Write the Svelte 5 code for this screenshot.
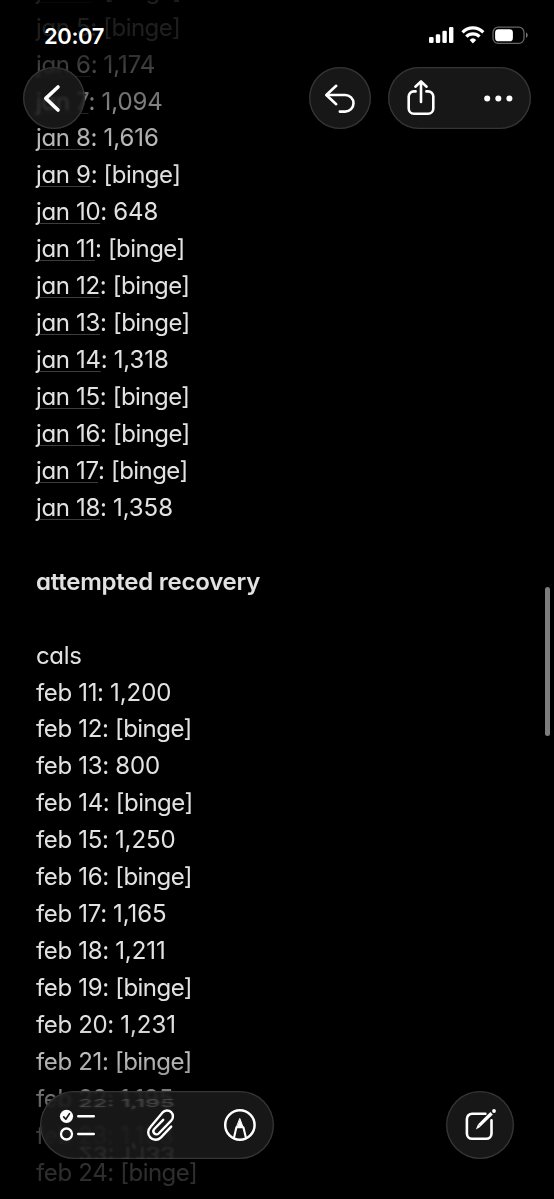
<script lang="ts">
    interface Entry {
        label?: string;
        value?: string;
        dated?: boolean;
        bold?: boolean;
    }

    const january: Entry[] = [
        { label: 'jan 4', value: '[binge]' },
        { label: 'jan 5', value: '[binge]' },
        { label: 'jan 6', value: '1,174' },
        { label: 'jan 7', value: '1,094' },
        { label: 'jan 8', value: '1,616' },
        { label: 'jan 9', value: '[binge]' },
        { label: 'jan 10', value: '648' },
        { label: 'jan 11', value: '[binge]' },
        { label: 'jan 12', value: '[binge]' },
        { label: 'jan 13', value: '[binge]' },
        { label: 'jan 14', value: '1,318' },
        { label: 'jan 15', value: '[binge]' },
        { label: 'jan 16', value: '[binge]' },
        { label: 'jan 17', value: '[binge]' },
        { label: 'jan 18', value: '1,358' }
    ].map((entry) => ({ ...entry, dated: true }))

    const recovery: Entry[] = [
        {},
        { label: 'attempted recovery', bold: true },
        {},
        { label: 'cals' },
        { label: 'feb 11', value: '1,200' },
        { label: 'feb 12', value: '[binge]' },
        { label: 'feb 13', value: '800' },
        { label: 'feb 14', value: '[binge]' },
        { label: 'feb 15', value: '1,250' },
        { label: 'feb 16', value: '[binge]' },
        { label: 'feb 17', value: '1,165' },
        { label: 'feb 18', value: '1,211' },
        { label: 'feb 19', value: '[binge]' },
        { label: 'feb 20', value: '1,231' },
        { label: 'feb 21', value: '[binge]' },
        { label: 'feb 22', value: '1,195' },
        { label: 'feb 23', value: '1,133' },
        { label: 'feb 24', value: '[binge]' }
    ]

    const lines = [...january, ...recovery]
</script>

<main class="screen">
    <article class="note">
        {#each lines as line}
            <p class="line" class:bold={line.bold}>
                <span class:dated={line.dated}>{line.label ?? ''}</span>{#if line.value}: <span class="value" class:word={line.value.startsWith('[')}>{line.value}</span>{/if}
            </p>
        {/each}
    </article>

    <div class="scrollbar"></div>

    <header class="top">
        <div class="status">
            <span class="time">20:07</span>
            <svg class="signals" width="102" height="22" viewBox="0 0 102 22" fill="#fff">
                <rect x="0" y="13" width="4.6" height="6" rx="1.3" />
                <rect x="6.8" y="10.3" width="4.4" height="8.7" rx="1.3" />
                <rect x="13.4" y="6.8" width="4.4" height="12.2" rx="1.3" />
                <rect x="20" y="3" width="4.4" height="16" rx="1.3" />
                <g fill="none" stroke="#fff" stroke-width="3.2">
                    <path d="M33.5 8.3a14.6 14.6 0 0 1 20.8 0" />
                    <path d="M37.3 12.6a9.4 9.4 0 0 1 13.2 0" />
                </g>
                <path d="M40.6 15.9a4.8 4.8 0 0 1 6.6 0L43.9 19.4z" />
                <rect x="64" y="3.2" width="31" height="16.2" rx="5.2" fill="none" stroke="#666" stroke-width="1.3" />
                <rect x="66.1" y="5.3" width="17.8" height="12" rx="3.4" />
                <path d="M97 8.6c2.2.9 2.2 4.4 0 5.3z" fill="#777" />
            </svg>
        </div>
        <nav class="actions">
            <button class="glass round back" type="button" aria-label="Back">
                <svg width="62" height="62" viewBox="0 0 62 62">
                    <path d="M35 20 22.8 31.4 35 43" stroke-width="3.6" />
                </svg>
            </button>
            <button class="glass round undo" type="button" aria-label="Undo">
                <svg width="62" height="62" viewBox="0 0 62 62">
                    <path d="M27.2 18.8 17.3 28 27.2 37.2" />
                    <path d="M18 28H36.2a8.3 8.3 0 0 1 0 16.6H30.8" />
                </svg>
            </button>
            <div class="glass pill">
                <button type="button" aria-label="Share">
                    <svg width="62" height="62" viewBox="0 0 62 62">
                        <path d="M27.6 24.4H25.9a5.2 5.2 0 0 0-5.2 5.2V41.5a5.2 5.2 0 0 0 5.2 5.2H40.1a5.2 5.2 0 0 0 5.2-5.2V29.6a5.2 5.2 0 0 0-5.2-5.2H38.4" />
                        <path d="M33 35V15M27.4 19.7 33 14.4 38.6 19.7" />
                    </svg>
                </button>
                <button type="button" aria-label="More">
                    <svg class="dots" width="62" height="62" viewBox="0 0 62 62">
                        <circle cx="18.2" cy="31.4" r="3" />
                        <circle cx="29.3" cy="31.4" r="3" />
                        <circle cx="40.4" cy="31.4" r="3" />
                    </svg>
                </button>
            </div>
        </nav>
    </header>

    <footer class="bottom">
        <div class="glass tools">
            <button type="button" aria-label="Checklist">
                <svg width="78" height="68" viewBox="0 0 78 68">
                    <circle cx="26.5" cy="25.3" r="6.6" fill="#fff" stroke="none" />
                    <path d="M23.7 25.9 25.8 28.2 29.5 22.6" stroke="#1b1b1b" stroke-width="1.7" />
                    <circle cx="26.5" cy="43" r="5.5" stroke-width="2.3" />
                    <path d="M38.2 25.3H53.8M38.2 43H53.8" stroke-width="2.4" />
                </svg>
            </button>
            <button type="button" aria-label="Attach">
                <svg width="78" height="68" viewBox="0 0 78 68">
                    <path d="M53.2 35.6 42.8 46.6a7.3 7.3 0 0 1-10.6-.2 7.4 7.4 0 0 1 .2-10.3L44.6 21.4a5.9 5.9 0 0 1 8.6-.2 6 6 0 0 1 0 8.4L40.7 42.5a3.1 3.1 0 0 1-4.4-.1 3.2 3.2 0 0 1 0-4.4L45.2 28.8" stroke-width="2.4" />
                </svg>
            </button>
            <button type="button" aria-label="Markup">
                <svg width="78" height="68" viewBox="0 0 78 68">
                    <circle cx="43.9" cy="34" r="14.7" stroke-width="2.5" />
                    <path d="M38.1 46.3 40.4 36.2H47.4L49.8 46.3" stroke-width="2.1" />
                    <path d="M43.9 27.8 46.9 35.7H40.9z" fill="#fff" stroke-width="1" />
                </svg>
            </button>
        </div>
        <button class="glass compose" type="button" aria-label="New note">
            <svg width="68" height="68" viewBox="0 0 68 68">
                <path d="M39.4 22.7H26.1a5.2 5.2 0 0 0-5.2 5.2V42.6a5.2 5.2 0 0 0 5.2 5.2H40.3a5.2 5.2 0 0 0 5.2-5.2V29.2" stroke-width="2.6" />
                <path d="M45.6 22.2 33.3 34.4" stroke-width="3.4" stroke-linecap="butt" />
                <path d="M32 33.3 29.9 38.4 34.6 35.8z" fill="#fff" stroke="none" />
                <circle cx="48" cy="20" r="1.9" fill="#fff" stroke="none" />
            </svg>
        </button>
    </footer>
</main>

<style>
    :global(body) {
        margin: 0;
        background: #000;
    }

    .screen {
        position: relative;
        width: 554px;
        height: 1199px;
        overflow: hidden;
        background: #000;
        font-family: Inter, 'Liberation Sans', sans-serif;
        font-feature-settings: 'cv11';
    }

    .note {
        box-sizing: border-box;
        height: 1199px;
        padding-left: 36px;
        overflow: hidden;
        color: #e2e2e2;
        font-size: 24px;
        mask-image: linear-gradient(
            #0002 0,
            #0002 40px,
            #0004 65px,
            #0008 100px,
            #000c 138px,
            #000 176px,
            #000 1020px,
            #000c 1062px,
            #0007 1098px,
            #0004 1135px,
            #0003 1172px
        );
    }

    .line {
        height: 36.94px;
        margin: 0;
        line-height: 36.94px;
        letter-spacing: -0.34px;
        white-space: nowrap;
    }

    /* the note is scrolled, its first visible line is cut off */
    .line:first-child {
        margin-top: -27.3px;
    }

    .bold {
        font-weight: 600;
        letter-spacing: -0.24px;
    }

    .value {
        letter-spacing: -0.08px;
    }

    .word {
        letter-spacing: -0.55px;
    }

    .dated {
        text-decoration: underline #3d3d3d 1.3px;
        text-underline-offset: 3px;
    }

    .scrollbar {
        position: absolute;
        top: 587px;
        right: 4px;
        width: 5px;
        height: 149px;
        border-radius: 3px;
        background: #7d7d7d;
    }

    .top {
        position: absolute;
        inset: 0 0 auto;
    }

    .status {
        display: flex;
        justify-content: space-between;
        height: 43px;
        padding: 24px 23px 0 44px;
    }

    .time {
        color: #fff;
        font-size: 22px;
        font-weight: 600;
        line-height: 24px;
        letter-spacing: -0.4px;
    }

    .actions {
        display: flex;
        padding: 0 23px;
    }

    button {
        display: block;
        padding: 0;
        border: 0;
        background: none;
    }

    .glass {
        box-sizing: border-box;
        background: rgba(27, 27, 27, 0.84);
        box-shadow: inset 0 0 0 1.3px #353535;
        backdrop-filter: blur(1.5px);
    }

    .round {
        width: 62px;
        height: 62px;
        border-radius: 50%;
    }

    .back {
        background: rgba(30, 30, 30, 0.76);
    }

    .undo {
        margin-left: auto;
    }

    .pill {
        display: flex;
        justify-content: space-between;
        width: 143px;
        margin-left: 17px;
        border-radius: 31px;
    }

    .bottom {
        position: absolute;
        inset: auto 40px 40px;
        display: flex;
        justify-content: space-between;
    }

    .tools {
        position: relative;
        display: flex;
        width: 234px;
        overflow: hidden;
        border-radius: 34px;
    }

    /* note lines refracted at the rim of the glass */
    .tools::before,
    .tools::after {
        position: absolute;
        left: 38px;
        color: rgba(255, 255, 255, 0.2);
        font-size: 24px;
        line-height: 24px;
        filter: blur(1.3px);
    }

    .tools::before {
        content: '22: 1,195';
        top: 0;
        transform: scaleY(0.45);
    }

    .tools::after {
        content: '23: 1,133';
        top: 50px;
        opacity: 0.5;
        transform: scaleY(-0.8);
    }

    .compose {
        width: 68px;
        height: 68px;
        border-radius: 50%;
    }

    svg {
        display: block;
    }

    button svg {
        position: relative;
        fill: none;
        stroke: #fff;
        stroke-width: 2.6;
        stroke-linecap: round;
        stroke-linejoin: round;
    }

    button .dots {
        fill: #fff;
        stroke: none;
    }
</style>
